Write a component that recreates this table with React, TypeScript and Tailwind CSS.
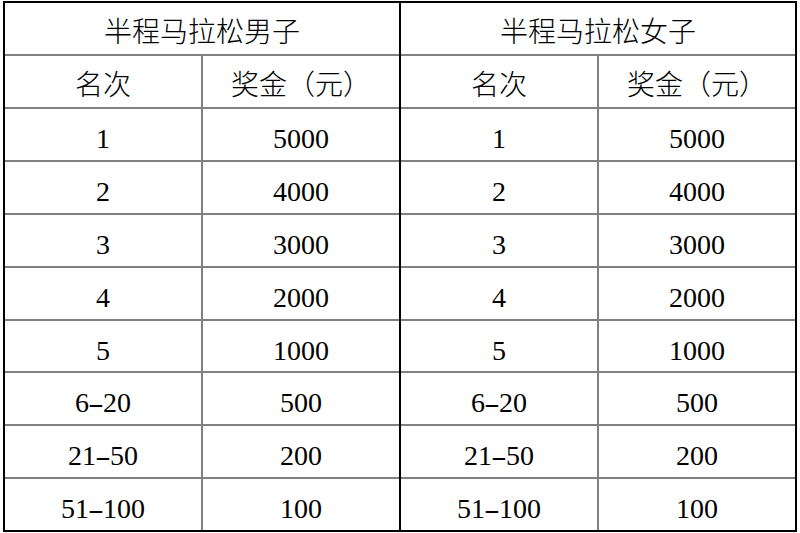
const rows = [
  ["1", "5000"],
  ["2", "4000"],
  ["3", "3000"],
  ["4", "2000"],
  ["5", "1000"],
  ["6-20", "500"],
  ["21-50", "200"],
  ["51-100", "100"],
];

// hyphen drawn half-width like the Song typeface in the source table
const Rank = ({ text }: { text: string }) => {
  const parts = text.split("-");
  if (parts.length === 1) return <>{text}</>;
  return (
    <>
      {parts[0]}
      <span className="inline-block w-[0.5em] text-center scale-x-[1.7]">-</span>
      {parts[1]}
    </>
  );
};

const Cell = ({ children, divider }: any) => (
  <div
    className={
      "flex-1 flex items-center justify-center pt-[9px] " +
      (divider ? "border-r-2 border-[#808080]" : "")
    }
  >
    {children}
  </div>
);

const Half = ({ title, last }: { title: string; last?: boolean }) => (
  <div className={"flex-1 flex flex-col " + (last ? "" : "border-r-2 border-black")}>
    <div className="h-[51px] flex items-center justify-center pt-[9px] font-light">{title}</div>
    <div className="h-[53px] flex border-t-2 border-[#808080] font-light">
      <Cell divider>名次</Cell>
      <Cell>奖金（元）</Cell>
    </div>
    {rows.map((r) => (
      <div key={r[0]} className="h-[52.9px] flex border-t-2 border-[#808080]">
        <Cell divider>
          <Rank text={r[0]} />
        </Cell>
        <Cell>{r[1]}</Cell>
      </div>
    ))}
  </div>
);

export default function App() {
  return (
    <div className="w-[800px] h-[533px] bg-white pl-[3px] pt-[1px]">
      <div
        className="w-[794px] flex border-2 border-black text-black text-[28px] leading-none"
        style={{ fontFamily: '"Liberation Serif", "Noto Sans CJK SC", serif' }}
      >
        <Half title="半程马拉松男子" />
        <Half title="半程马拉松女子" last />
      </div>
    </div>
  );
}
